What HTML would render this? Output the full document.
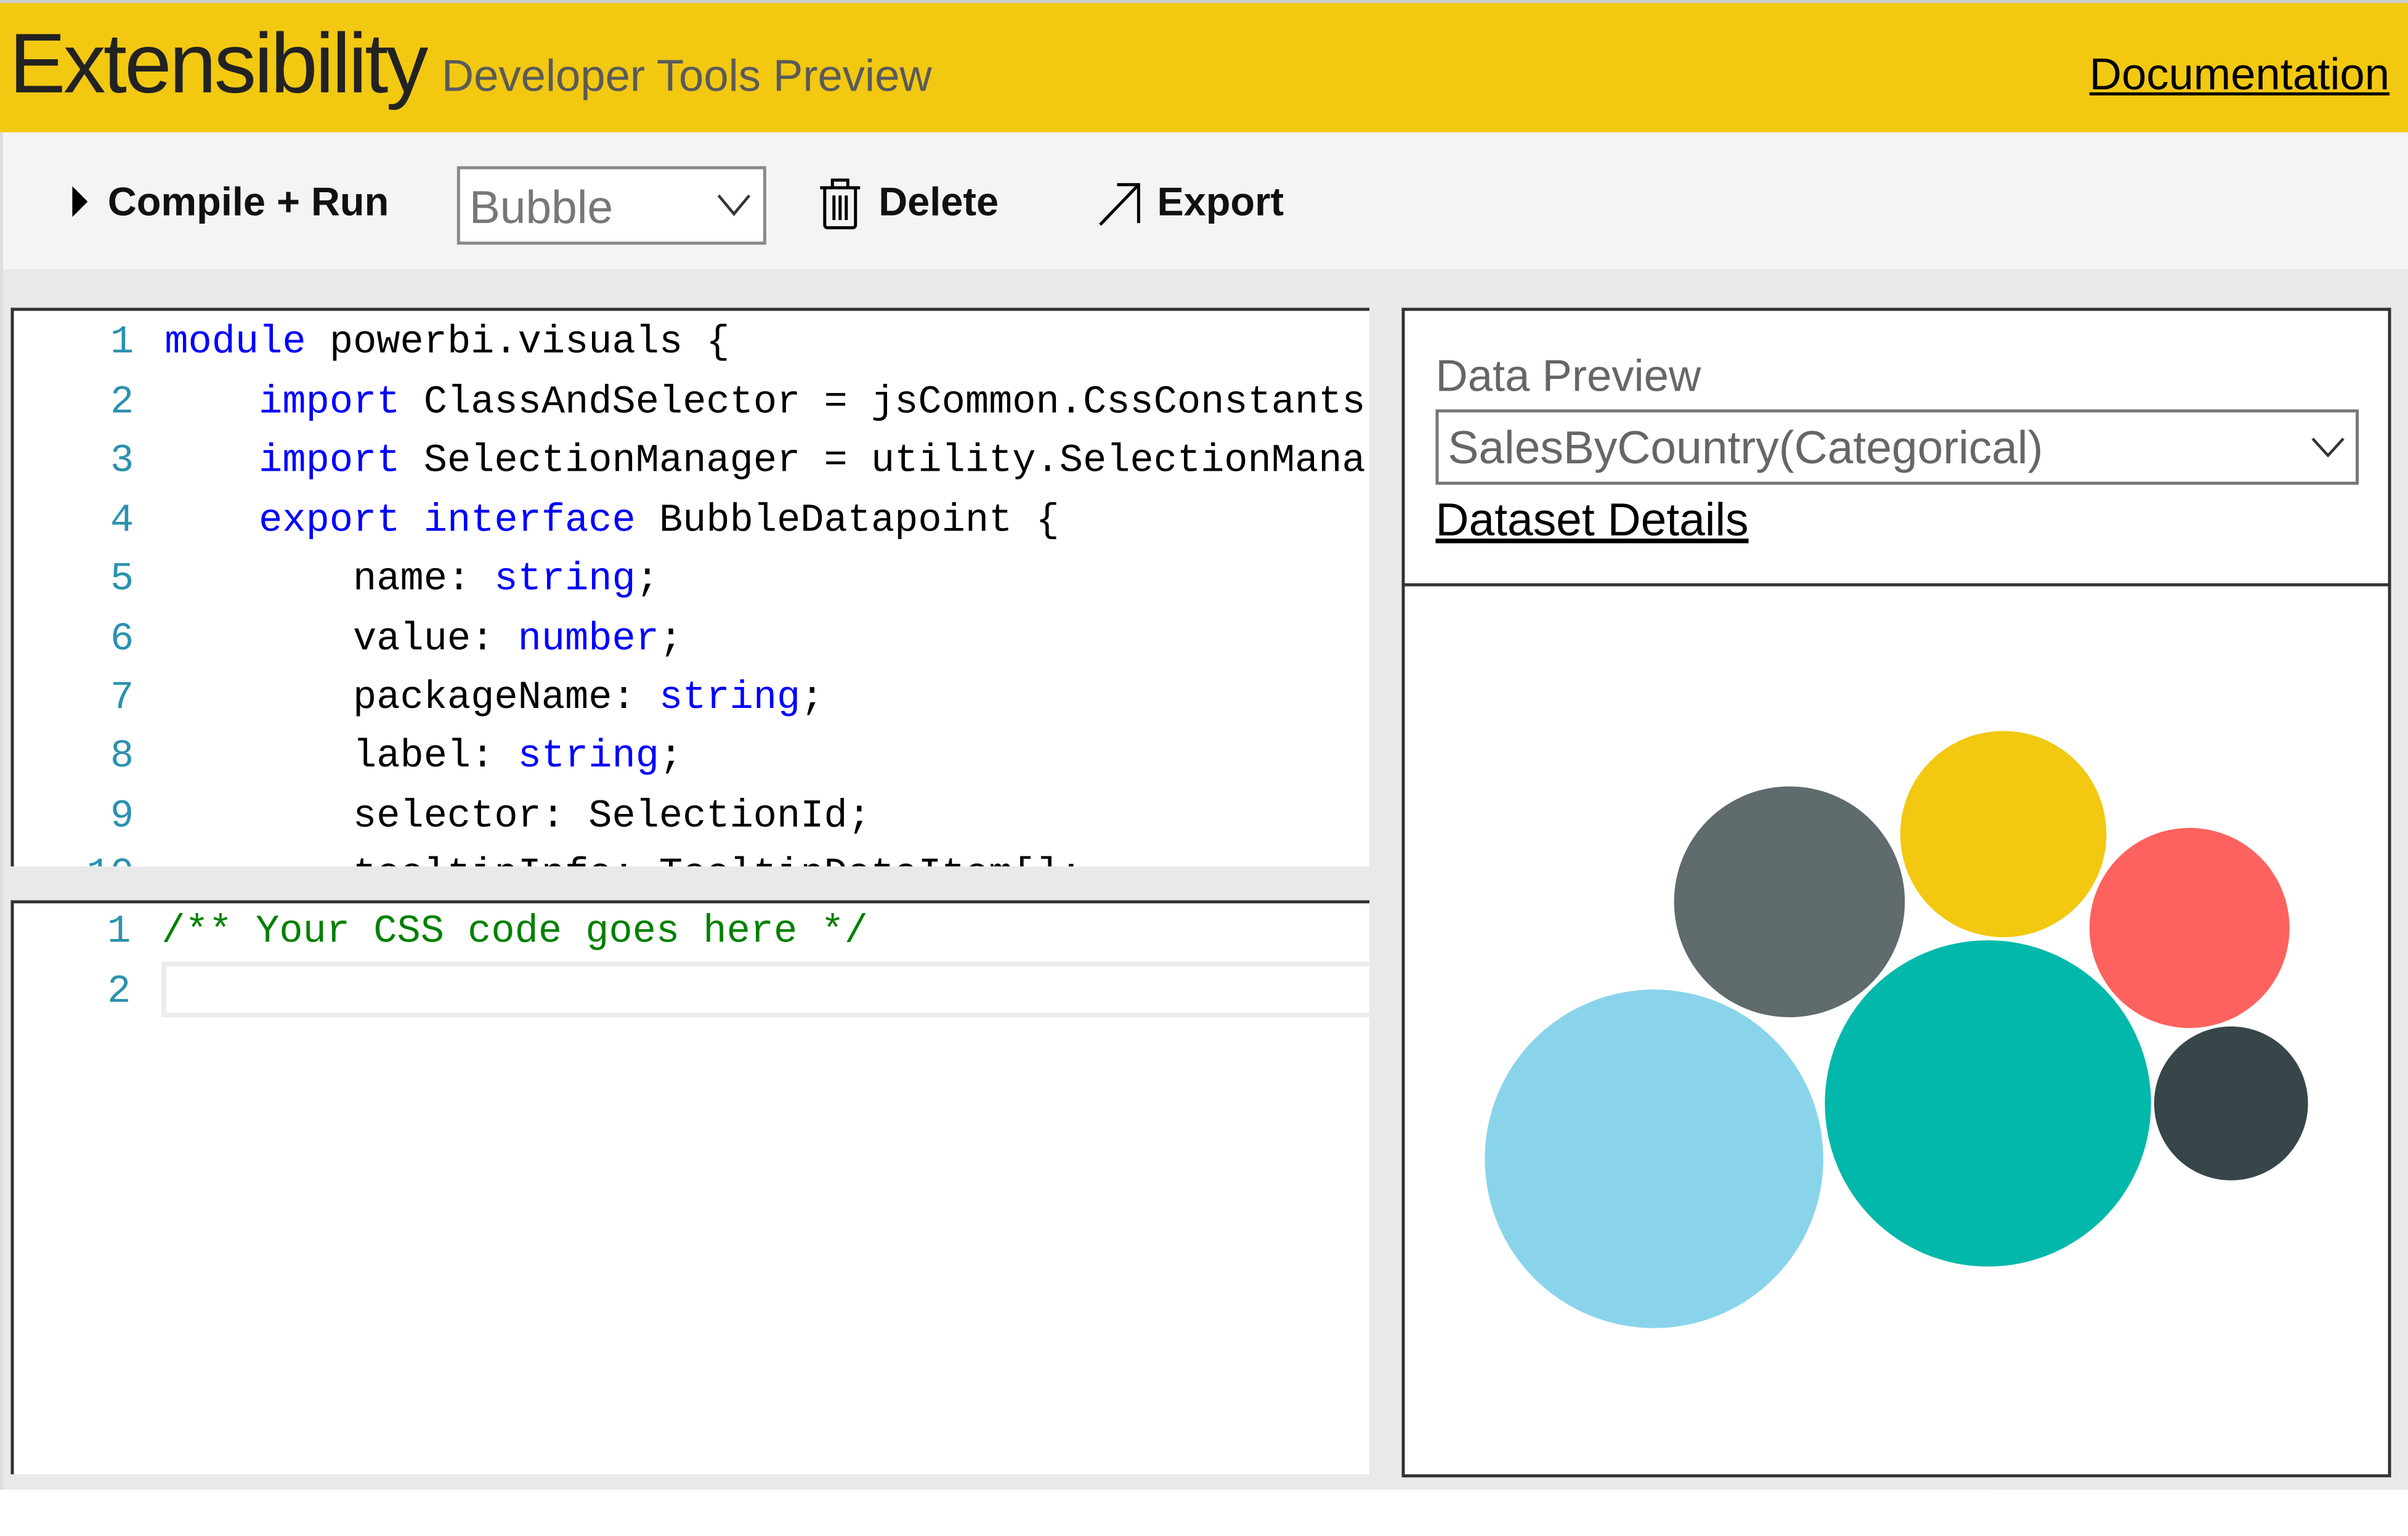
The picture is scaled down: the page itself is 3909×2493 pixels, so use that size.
<!DOCTYPE html>
<html><head><meta charset="utf-8"><style>
html,body{margin:0;padding:0;background:#fff;overflow:hidden;width:3909px;height:2491px}
#s{position:absolute;left:0;top:0;width:1565px;height:998px;transform:scale(2.49776);transform-origin:0 0;font-family:"Liberation Sans",sans-serif;background:#fff}
.a{position:absolute;white-space:pre;line-height:1}
.m{font-family:"Liberation Mono",monospace;font-size:25.5px}
.n{color:#2b91af;text-align:right;width:30px;left:55px}
.k{color:#0000ff}
</style></head><body><div id="s">
<div class="a" style="left:0;top:0;width:1565px;height:2px;background:#ccc"></div>
<div class="a" style="left:0;top:2px;width:1565px;height:84px;background:#f2c811"></div>
<div class="a" style="left:6px;top:14px;font-size:55px;letter-spacing:-1.5px;color:#222">Extensibility</div>
<div class="a" style="left:287px;top:36px;font-size:29px;color:#5a5a5a">Developer Tools Preview</div>
<div class="a" style="right:12px;top:35px;font-size:29px;color:#000;text-decoration:underline">Documentation</div>
<div class="a" style="left:0;top:86px;width:1565px;height:89px;background:#f4f4f4"></div>
<div class="a" style="left:0;top:175px;width:1565px;height:793px;background:#e9e9e9"></div>
<div class="a" style="left:0;top:86px;width:2px;height:882px;background:#ddd"></div>
<svg class="a" style="left:44px;top:119px" width="16" height="24"><path d="M3 2 L13 12 L3 22Z" fill="#000"/></svg>
<div class="a" style="left:70px;top:118px;font-size:26px;font-weight:bold;color:#111">Compile + Run</div>
<div class="a" style="left:297px;top:108px;width:197px;height:47px;border:2px solid #8a8a8a;background:#fff"></div>
<div class="a" style="left:305px;top:121px;font-size:30px;color:#777">Bubble</div>
<svg class="a" style="left:465px;top:124px" width="26" height="18"><path d="M2 3 L12 15 L22 3" fill="none" stroke="#333" stroke-width="1.8"/></svg>
<svg class="a" style="left:531px;top:114px" width="30" height="36"><path d="M2 8 H28 M10 8 V3 H20 V8 M5 8 V32 Q5 34 7 34 H23 Q25 34 25 32 V8 M11 13 V29 M15 13 V29 M19 13 V29" fill="none" stroke="#000" stroke-width="2"/></svg>
<div class="a" style="left:571px;top:118px;font-size:26px;font-weight:bold;color:#111">Delete</div>
<svg class="a" style="left:712px;top:117px" width="32" height="32"><path d="M3 29 L28 3 M14 3 H28 V28" fill="none" stroke="#000" stroke-width="2"/></svg>
<div class="a" style="left:752px;top:118px;font-size:26px;font-weight:bold;color:#111">Export</div>

<div class="a" style="left:7px;top:200px;width:883px;height:363px;background:#fff;border-top:2px solid #333;border-left:2px solid #333;overflow:hidden;box-sizing:border-box">
<div style="position:absolute;left:-7px;top:-200px;width:1000px;height:800px">
<div class="a m n" style="top:208px">1</div><div class="a m" style="left:105px;top:208px"><span class="k">module</span> powerbi.visuals {</div>
<div class="a m n" style="top:247px">2</div><div class="a m" style="left:105px;top:247px">    <span class="k">import</span> ClassAndSelector = jsCommon.CssConstants</div>
<div class="a m n" style="top:285px">3</div><div class="a m" style="left:105px;top:285px">    <span class="k">import</span> SelectionManager = utility.SelectionMana</div>
<div class="a m n" style="top:324px">4</div><div class="a m" style="left:105px;top:324px">    <span class="k">export interface</span> BubbleDatapoint {</div>
<div class="a m n" style="top:362px">5</div><div class="a m" style="left:105px;top:362px">        name: <span class="k">string</span>;</div>
<div class="a m n" style="top:401px">6</div><div class="a m" style="left:105px;top:401px">        value: <span class="k">number</span>;</div>
<div class="a m n" style="top:439px">7</div><div class="a m" style="left:105px;top:439px">        packageName: <span class="k">string</span>;</div>
<div class="a m n" style="top:477px">8</div><div class="a m" style="left:105px;top:477px">        label: <span class="k">string</span>;</div>
<div class="a m n" style="top:516px">9</div><div class="a m" style="left:105px;top:516px">        selector: SelectionId;</div>
<div class="a m n" style="top:554px;left:40px;width:45px">10</div><div class="a m" style="left:105px;top:554px">        tooltipInfo: TooltipDataItem[];</div>
</div></div>

<div class="a" style="left:7px;top:585px;width:883px;height:373px;background:#fff;border-top:2px solid #333;border-left:2px solid #333;box-sizing:border-box"></div>
<div class="a m n" style="top:593px">1</div><div class="a m" style="left:105px;top:593px;color:#008000">/** Your CSS code goes here */</div>
<div class="a" style="left:105px;top:625px;width:785px;height:36px;border:3px solid #ececec;border-right:none;box-sizing:border-box"></div>
<div class="a m n" style="top:632px">2</div>

<div class="a" style="left:911px;top:200px;width:643px;height:760px;background:#fff;border:2px solid #333;box-sizing:border-box"></div>
<div class="a" style="left:911px;top:379px;width:643px;height:2px;background:#333"></div>
<div class="a" style="left:933px;top:231px;font-size:29px;color:#666">Data Preview</div>
<div class="a" style="left:933px;top:266px;width:600px;height:49px;border:2px solid #777;box-sizing:border-box"></div>
<div class="a" style="left:941px;top:277px;font-size:30px;color:#666">SalesByCountry(Categorical)</div>
<svg class="a" style="left:1501px;top:282px" width="26" height="18"><path d="M2 3 L12 14 L22 3" fill="none" stroke="#333" stroke-width="1.8"/></svg>
<div class="a" style="left:933px;top:324px;font-size:30px;color:#000;text-decoration:underline">Dataset Details</div>

<svg class="a" style="left:0;top:0" width="1565" height="998">
<circle cx="1163" cy="586" r="75" fill="#5f6b6d"/>
<circle cx="1302" cy="542" r="67" fill="#f2c811"/>
<circle cx="1423" cy="603" r="65" fill="#fd625e"/>
<circle cx="1075" cy="753" r="110" fill="#8ad4eb"/>
<circle cx="1292" cy="717" r="106" fill="#01b8aa"/>
<circle cx="1450" cy="717" r="50" fill="#374649"/>
</svg>
<div class="a" style="left:0;top:968px;width:1565px;height:30px;background:#fff"></div>
<div class="a" style="left:1297px;top:960px;width:268px;height:8px;background:#e9e9e9"></div>
</div></body></html>
